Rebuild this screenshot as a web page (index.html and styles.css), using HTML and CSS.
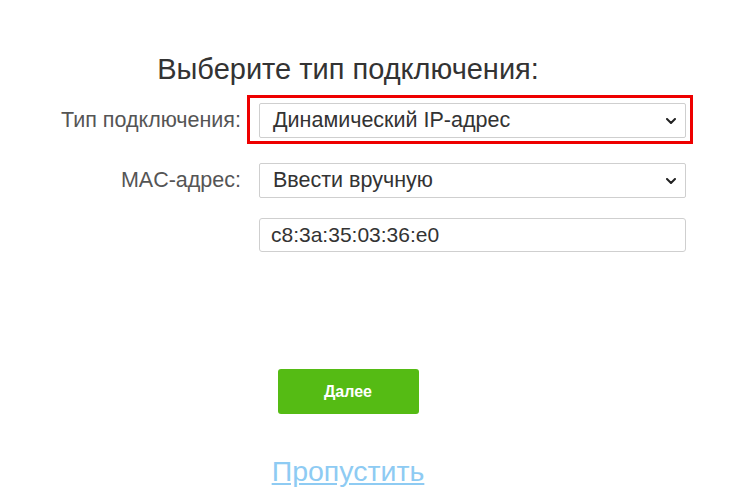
FILE: index.html
```html
<!DOCTYPE html>
<html lang="ru">
<head>
<meta charset="utf-8">
<title>Тип подключения</title>
<link rel="stylesheet" href="styles.css">
</head>
<body>
<div class="wizard">
  <h1 class="title">Выберите тип подключения:</h1>
  <div class="form">
    <div class="row row-type">
      <label class="label">Тип подключения:</label>
      <div class="field highlight">
        <div class="select">
          <span class="select-value">Динамический IP-адрес</span>
          <svg class="chevron" viewBox="0 0 10 6" width="10" height="6"><path d="M1 1l4 4 4-4" fill="none" stroke="#222" stroke-width="2" stroke-linecap="round" stroke-linejoin="round"/></svg>
        </div>
      </div>
    </div>
    <div class="row row-mac">
      <label class="label">MAC-адрес:</label>
      <div class="field">
        <div class="select">
          <span class="select-value">Ввести вручную</span>
          <svg class="chevron" viewBox="0 0 10 6" width="10" height="6"><path d="M1 1l4 4 4-4" fill="none" stroke="#222" stroke-width="2" stroke-linecap="round" stroke-linejoin="round"/></svg>
        </div>
      </div>
    </div>
    <div class="row row-input">
      <span class="label"></span>
      <div class="field">
        <div class="input">c8:3a:35:03:36:e0</div>
      </div>
    </div>
  </div>
  <div class="actions">
    <button class="btn-next">Далее</button>
  </div>
  <div class="skip"><a class="skip-link" href="#">Пропустить</a></div>
</div>
</body>
</html>
```

FILE: styles.css
```css
html, body {
  margin: 0;
  padding: 0;
  background: #ffffff;
}
body {
  font-family: "Liberation Sans", Arial, sans-serif;
  color: #333333;
}
.wizard {
  width: 696px;
  padding-top: 50px;
}
.title {
  margin: 0;
  text-align: center;
  font-size: 29px;
  font-weight: normal;
  line-height: 38px;
  color: #333333;
}
.form {
  margin-top: 15px;
}
.row {
  display: grid;
  grid-template-columns: 241px 427px;
  column-gap: 18px;
  align-items: center;
}
.row-mac {
  margin-top: 25px;
}
.row-input {
  margin-top: 20px;
}
.label {
  text-align: right;
  font-size: 21.5px;
  color: #555555;
}
.field {
  position: relative;
}
.highlight::after {
  content: "";
  position: absolute;
  left: -12px;
  right: -7px;
  top: -8px;
  bottom: -6px;
  border: 3px solid #ee0000;
  pointer-events: none;
}
.select {
  box-sizing: border-box;
  height: 35px;
  border: 1px solid #cfcfcf;
  border-radius: 2px;
  display: flex;
  align-items: center;
  justify-content: space-between;
  padding: 0 9px 0 13px;
  font-size: 21.5px;
  color: #333333;
  background: #fff;
}
.chevron {
  display: block;
}
.input {
  box-sizing: border-box;
  height: 34px;
  border: 1px solid #cfcfcf;
  border-radius: 3px;
  display: flex;
  align-items: center;
  padding: 0 11px;
  font-size: 21px;
  color: #333333;
}
.actions {
  margin-top: 117px;
  display: flex;
  justify-content: center;
}
.btn-next {
  width: 141px;
  height: 45px;
  border: 0;
  border-radius: 3px;
  background: #55bb14;
  color: #ffffff;
  font-family: "Liberation Sans", Arial, sans-serif;
  font-size: 16px;
  font-weight: bold;
  padding: 0;
}
.skip {
  margin-top: 41px;
  text-align: center;
}
.skip-link {
  font-size: 28.5px;
  color: #8ecbf3;
  text-decoration: underline;
}
```
